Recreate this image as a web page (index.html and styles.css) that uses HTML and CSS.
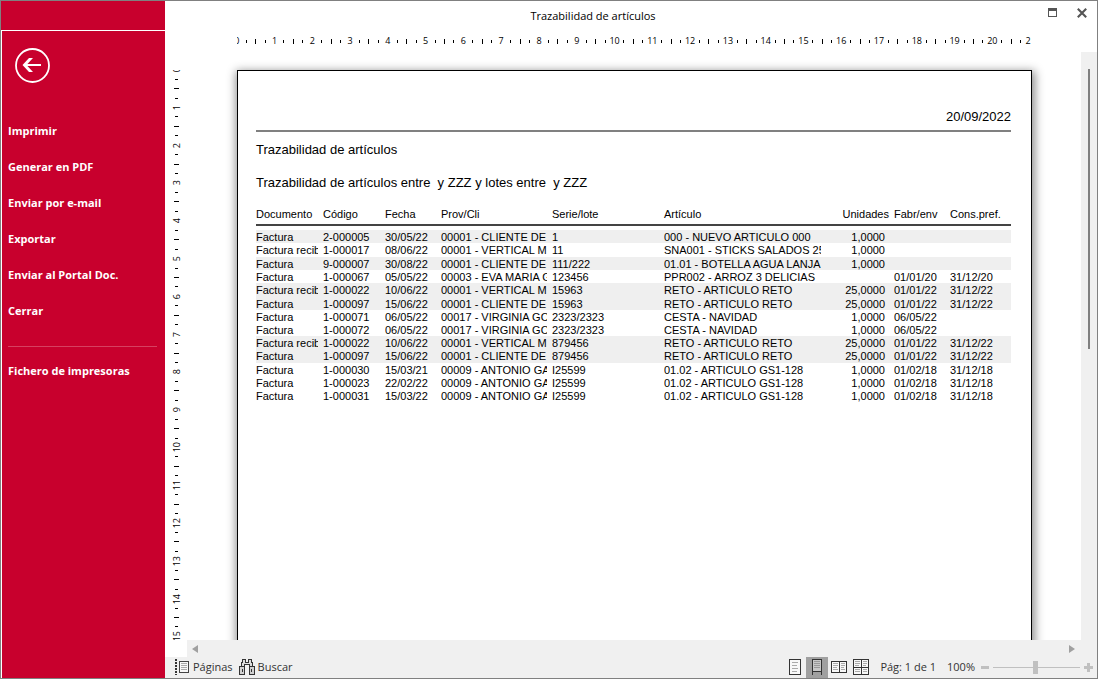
FILE: index.html
```html
<!DOCTYPE html>
<html lang="es">
<head>
<meta charset="utf-8">
<title>Trazabilidad de artículos</title>
<link rel="stylesheet" href="styles.css">
</head>
<body>
<div class="window">
  <aside class="sidebar">
    <div class="sidebar-top"></div>
    <nav class="menu">
      <button class="back" type="button" aria-label="Volver">
        <svg width="36" height="36" viewBox="0 0 36 36" fill="none" stroke="#fff"><circle cx="18.500" cy="18.500" r="16.5" stroke-width="1.8"/><path d="M11 18h16" stroke-width="2"/><path d="M15 11h4l-6.500 7 6.500 7h-4l-6.500-7z" fill="#fff" stroke="none"/></svg>
      </button>
      <button class="item" type="button">Imprimir</button>
      <button class="item" type="button">Generar en PDF</button>
      <button class="item" type="button">Enviar por e-mail</button>
      <button class="item" type="button">Exportar</button>
      <button class="item" type="button">Enviar al Portal Doc.</button>
      <button class="item" type="button">Cerrar</button>
      <hr class="separator">
      <button class="item" type="button">Fichero de impresoras</button>
    </nav>
  </aside>
  <main class="preview">
    <header class="titlebar">
      <h1 class="title">Trazabilidad de artículos</h1>
      <div class="window-buttons">
        <button type="button" aria-label="Maximizar"><svg width="10" height="10" viewBox="0 0 10 10" shape-rendering="crispEdges"><path d="M1 0h9v9H1zM2 3v5h7V3z" fill="#555" fill-rule="evenodd"/></svg></button>
        <button type="button" aria-label="Cerrar ventana"><svg width="10" height="10" viewBox="0 0 10 10"><path d="M.8.8l8.4 8.4M9.200.8L.8 9.200" stroke="#555" stroke-width="2.1"/></svg></button>
      </div>
    </header>
    <div class="ruler-row">
      <div class="ruler">
        <div class="scale">
          <div class="cm"><span>0</span><i></i><b></b><i></i></div>
          <div class="cm"><span>1</span><i></i><b></b><i></i></div>
          <div class="cm"><span>2</span><i></i><b></b><i></i></div>
          <div class="cm"><span>3</span><i></i><b></b><i></i></div>
          <div class="cm"><span>4</span><i></i><b></b><i></i></div>
          <div class="cm"><span>5</span><i></i><b></b><i></i></div>
          <div class="cm"><span>6</span><i></i><b></b><i></i></div>
          <div class="cm"><span>7</span><i></i><b></b><i></i></div>
          <div class="cm"><span>8</span><i></i><b></b><i></i></div>
          <div class="cm"><span>9</span><i></i><b></b><i></i></div>
          <div class="cm"><span>10</span><i></i><b></b><i></i></div>
          <div class="cm"><span>11</span><i></i><b></b><i></i></div>
          <div class="cm"><span>12</span><i></i><b></b><i></i></div>
          <div class="cm"><span>13</span><i></i><b></b><i></i></div>
          <div class="cm"><span>14</span><i></i><b></b><i></i></div>
          <div class="cm"><span>15</span><i></i><b></b><i></i></div>
          <div class="cm"><span>16</span><i></i><b></b><i></i></div>
          <div class="cm"><span>17</span><i></i><b></b><i></i></div>
          <div class="cm"><span>18</span><i></i><b></b><i></i></div>
          <div class="cm"><span>19</span><i></i><b></b><i></i></div>
          <div class="cm"><span>20</span><i></i><b></b><i></i></div>
          <div class="cm last"><span>2</span></div>
        </div>
      </div>
    </div>
    <div class="workspace">
      <div class="ruler-column">
        <div class="scale">
          <div class="cm"><span>0</span><i></i><b></b><i></i></div>
          <div class="cm"><span>1</span><i></i><b></b><i></i></div>
          <div class="cm"><span>2</span><i></i><b></b><i></i></div>
          <div class="cm"><span>3</span><i></i><b></b><i></i></div>
          <div class="cm"><span>4</span><i></i><b></b><i></i></div>
          <div class="cm"><span>5</span><i></i><b></b><i></i></div>
          <div class="cm"><span>6</span><i></i><b></b><i></i></div>
          <div class="cm"><span>7</span><i></i><b></b><i></i></div>
          <div class="cm"><span>8</span><i></i><b></b><i></i></div>
          <div class="cm"><span>9</span><i></i><b></b><i></i></div>
          <div class="cm"><span>10</span><i></i><b></b><i></i></div>
          <div class="cm"><span>11</span><i></i><b></b><i></i></div>
          <div class="cm"><span>12</span><i></i><b></b><i></i></div>
          <div class="cm"><span>13</span><i></i><b></b><i></i></div>
          <div class="cm"><span>14</span><i></i><b></b><i></i></div>
          <div class="cm"><span>15</span><i></i><b></b><i></i></div>
        </div>
      </div>
      <div class="canvas">
        <article class="paper">
          <p class="date">20/09/2022</p>
          <h2 class="heading">Trazabilidad de artículos</h2>
          <p class="filter">Trazabilidad de artículos entre&nbsp; y ZZZ y lotes entre&nbsp; y ZZZ</p>
          <table class="report">
            <colgroup><col class="c-doc"><col class="c-code"><col class="c-date"><col class="c-client"><col class="c-lot"><col class="c-article"><col class="c-units"><col class="c-date"><col class="c-pref"></colgroup>
            <thead>
              <tr><th>Documento</th><th>Código</th><th>Fecha</th><th>Prov/Cli</th><th>Serie/lote</th><th>Artículo</th><th class="num">Unidades</th><th>Fabr/env</th><th>Cons.pref.</th></tr>
            </thead>
            <tbody>
              <tr class="shade"><td>Factura</td><td>2-000005</td><td>30/05/22</td><td>00001 - CLIENTE DE</td><td>1</td><td>000 - NUEVO ARTICULO 000</td><td class="num">1,0000</td><td></td><td></td></tr>
              <tr><td>Factura recib</td><td>1-000017</td><td>08/06/22</td><td>00001 - VERTICAL M</td><td>11</td><td>SNA001 - STICKS SALADOS 25</td><td class="num">1,0000</td><td></td><td></td></tr>
              <tr class="shade"><td>Factura</td><td>9-000007</td><td>30/08/22</td><td>00001 - CLIENTE DE</td><td>111/222</td><td>01.01 - BOTELLA AGUA LANJA</td><td class="num">1,0000</td><td></td><td></td></tr>
              <tr><td>Factura</td><td>1-000067</td><td>05/05/22</td><td>00003 - EVA MARIA G</td><td>123456</td><td>PPR002 - ARROZ 3 DELICIAS</td><td></td><td>01/01/20</td><td>31/12/20</td></tr>
              <tr class="shade"><td>Factura recib</td><td>1-000022</td><td>10/06/22</td><td>00001 - VERTICAL M</td><td>15963</td><td>RETO - ARTICULO RETO</td><td class="num">25,0000</td><td>01/01/22</td><td>31/12/22</td></tr>
              <tr class="shade"><td>Factura</td><td>1-000097</td><td>15/06/22</td><td>00001 - CLIENTE DE</td><td>15963</td><td>RETO - ARTICULO RETO</td><td class="num">25,0000</td><td>01/01/22</td><td>31/12/22</td></tr>
              <tr><td>Factura</td><td>1-000071</td><td>06/05/22</td><td>00017 - VIRGINIA GO</td><td>2323/2323</td><td>CESTA - NAVIDAD</td><td class="num">1,0000</td><td>06/05/22</td><td></td></tr>
              <tr><td>Factura</td><td>1-000072</td><td>06/05/22</td><td>00017 - VIRGINIA GO</td><td>2323/2323</td><td>CESTA - NAVIDAD</td><td class="num">1,0000</td><td>06/05/22</td><td></td></tr>
              <tr class="shade"><td>Factura recib</td><td>1-000022</td><td>10/06/22</td><td>00001 - VERTICAL M</td><td>879456</td><td>RETO - ARTICULO RETO</td><td class="num">25,0000</td><td>01/01/22</td><td>31/12/22</td></tr>
              <tr class="shade"><td>Factura</td><td>1-000097</td><td>15/06/22</td><td>00001 - CLIENTE DE</td><td>879456</td><td>RETO - ARTICULO RETO</td><td class="num">25,0000</td><td>01/01/22</td><td>31/12/22</td></tr>
              <tr><td>Factura</td><td>1-000030</td><td>15/03/21</td><td>00009 - ANTONIO GA</td><td>I25599</td><td>01.02 - ARTICULO GS1-128</td><td class="num">1,0000</td><td>01/02/18</td><td>31/12/18</td></tr>
              <tr><td>Factura</td><td>1-000023</td><td>22/02/22</td><td>00009 - ANTONIO GA</td><td>I25599</td><td>01.02 - ARTICULO GS1-128</td><td class="num">1,0000</td><td>01/02/18</td><td>31/12/18</td></tr>
              <tr><td>Factura</td><td>1-000031</td><td>15/03/22</td><td>00009 - ANTONIO GA</td><td>I25599</td><td>01.02 - ARTICULO GS1-128</td><td class="num">1,0000</td><td>01/02/18</td><td>31/12/18</td></tr>
            </tbody>
          </table>
        </article>
      </div>
      <div class="vscroll"><div class="thumb"></div></div>
    </div>
    <div class="hscroll">
      <button type="button" aria-label="Desplazar a la izquierda"><svg width="6" height="8" viewBox="0 0 6 8"><path d="M6 0v8L0 4z" fill="#a0a0a0"/></svg></button>
      <button type="button" aria-label="Desplazar a la derecha"><svg width="6" height="8" viewBox="0 0 6 8"><path d="M0 0v8l6-4z" fill="#a0a0a0"/></svg></button>
    </div>
    <footer class="statusbar">
      <button class="tool" type="button">
        <svg width="16" height="16" viewBox="0 0 16 16" shape-rendering="crispEdges"><path d="M2 0v16" stroke="#333" stroke-width="2" stroke-dasharray="2 1"/><path d="M5.500 2.500h9v11h-9z" fill="#f8f8f8" stroke="#444"/><path d="M7 4.500h6M7 6.500h6M7 8.500h6M7 10.500h6" stroke="#aaa"/></svg>
        Páginas
      </button>
      <button class="tool" type="button">
        <svg width="16" height="16" viewBox="0 0 16 16" shape-rendering="crispEdges" stroke="#333"><path d="M3.500.5h3v3h3v-3h3v3h1v4h-3v-2h-5v2h-3v-4h1z" fill="#ddd"/><path d="M.5 7.500h5v8h-5zM10.500 7.500h5v8h-5z" fill="#d0d0d0"/><path d="M3.500 10v3M12.500 10v3" fill="none"/></svg>
        Buscar
      </button>
      <div class="views">
        <button type="button" aria-label="Una página"><svg width="16" height="16" viewBox="0 0 16 16" shape-rendering="crispEdges"><path d="M2.500.5h11v15h-11z" fill="#f8f8f8" stroke="#333"/><path d="M5 3.500h6M5 6.500h5M5 9.500h6M5 12.500h5" stroke="#aaa"/></svg></button>
        <button class="selected" type="button" aria-label="Continuo"><svg width="16" height="16" viewBox="0 0 16 16" shape-rendering="crispEdges"><path d="M3.500.5h9v12h-9z" fill="#c8c8c8" stroke="#333"/><path d="M5 2.500h6M5 4.500h6M5 6.500h6M5 8.500h6" stroke="#999"/><path d="M3.500 12v4M12.500 12v4" stroke="#333" fill="none"/></svg></button>
        <button type="button" aria-label="Dos páginas"><svg width="16" height="16" viewBox="0 0 16 16" shape-rendering="crispEdges"><path d="M.5 2.500h15v11H.5zM8.500 2v12" fill="#f8f8f8" stroke="#333"/><path d="M2 4.500h5M2 6.500h5M2 8.500h4M2 10.500h5M10 4.500h4M10 6.500h4M10 8.500h3M10 10.500h4" stroke="#aaa"/></svg></button>
        <button type="button" aria-label="Varias páginas"><svg width="16" height="16" viewBox="0 0 16 16" shape-rendering="crispEdges"><path d="M.5.5h15v15H.5z" fill="#f8f8f8"/><path d="M2 2.500h5M2 4.500h5M2 6.500h4M10 2.500h4M10 4.500h4M10 6.500h3M2 10.500h5M2 12.500h5M10 10.500h4M10 12.500h4" stroke="#aaa"/><path d="M.5.5h15v15H.5zM8.500 0v16M0 8.500h16" fill="none" stroke="#333"/></svg></button>
      </div>
      <span class="page-count">Pág: 1 de 1</span>
      <span class="percent">100%</span>
      <div class="zoom">
        <button type="button" aria-label="Alejar"><svg width="9" height="9" viewBox="0 0 9 9"><path d="M1 3h8v3H1z" fill="#c0c0c0"/></svg></button>
        <input type="range" aria-label="Zoom" min="0" max="100" value="49">
        <button type="button" aria-label="Acercar"><svg width="9" height="9" viewBox="0 0 9 9"><path d="M3 0h3v3h3v3H6v3H3V6H0V3h3z" fill="#c0c0c0"/></svg></button>
      </div>
    </footer>
  </main>
</div>
</body>
</html>
```
FILE: styles.css
```css
* { box-sizing: border-box; }

body {
  margin: 0;
  color: #000;
  font-family: "Open Sans", "Noto Sans", sans-serif;
  font-size: 11px;
  background: #fff;
}

button {
  display: flex;
  align-items: center;
  justify-content: center;
  padding: 0;
  border: 0;
  background: none;
  color: inherit;
  font: inherit;
}

svg { display: block; flex: none; }

.window {
  display: flex;
  height: 100vh;
  border: 1px solid #808080;
}

.sidebar {
  display: flex;
  flex: none;
  flex-direction: column;
  width: 164px;
  background: #c8002d;
  color: #fff;
}

.sidebar-top {
  height: 30px;
  border-bottom: 1px solid #fff;
}

.menu {
  flex: 1;
  border-left: 1px solid #fff;
  padding: 16px 6px 0;
}

.back { margin: 0 0 29px 6px; }

.item {
  justify-content: flex-start;
  width: 100%;
  height: 36px;
  font-size: 11px;
  font-weight: 700;
}

.separator {
  height: 1px;
  margin: 18px 2px 5px 0;
  border: 0;
  background: #d64060;
}

.preview {
  display: flex;
  flex: 1;
  flex-direction: column;
  min-width: 0;
}

.titlebar {
  display: flex;
  flex: none;
  align-items: flex-start;
  height: 30px;
}

.title {
  flex: 1;
  margin: 0;
  font-size: 11px;
  font-weight: 400;
  line-height: 30px;
  text-align: center;
}

.window-buttons {
  display: flex;
  justify-content: flex-end;
  gap: 20px;
  width: 76px;
  height: 23px;
  padding-right: 10px;
}

.ruler-row {
  display: flex;
  flex: none;
  justify-content: center;
  height: 21px;
  padding: 0 16px 0 23px;
}

.ruler {
  width: 795px;
  height: 20px;
  overflow: hidden;
}

.scale {
  display: flex;
  font-size: 9px;
  line-height: 20px;
}

.ruler .scale { margin-left: -5px; }

.cm {
  display: grid;
  flex: none;
  align-items: center;
  justify-items: center;
}

.ruler .cm {
  grid-template-columns: repeat(4, minmax(0, 1fr));
  width: 1cm;
  height: 20px;
}

.ruler .last { justify-items: start; }

.cm i, .cm b { background: #000; }
.ruler i { width: 1px; height: 3px; }
.ruler b { width: 1px; height: 5px; }

.workspace {
  display: flex;
  flex: 1;
  min-height: 0;
}

.ruler-column {
  flex: none;
  width: 23px;
  margin-top: 18px;
  overflow: hidden;
}

.ruler-column .scale {
  flex-direction: column;
  margin-top: -5px;
}

.ruler-column .cm {
  grid-template-rows: repeat(4, minmax(0, 1fr));
  width: 23px;
  height: 1cm;
}

.ruler-column span {
  line-height: 12px;
  writing-mode: vertical-rl;
  transform: rotate(180deg);
}

.ruler-column i { width: 3px; height: 1px; }
.ruler-column b { width: 5px; height: 1px; }

.canvas {
  display: flex;
  flex: 1;
  justify-content: center;
  align-items: flex-start;
  min-width: 0;
  padding-top: 18px;
  overflow: hidden;
}

.paper {
  flex: none;
  width: 795px;
  min-height: 29.7cm;
  padding: 38px 20px 40px 18px;
  border: 1px solid #000;
  background: #fff;
  box-shadow: 1px 3px 9px 2px rgba(0, 0, 0, 0.45);
  font-family: "Liberation Sans", Arial, sans-serif;
  font-size: 13px;
  line-height: 16px;
}

.date {
  margin: 0;
  padding-bottom: 5px;
  border-bottom: 2px solid #808080;
  text-align: right;
}

.heading {
  margin: 10px 0 0;
  font-size: 13px;
  font-weight: 400;
}

.filter { margin: 17px 0 0; }

.report {
  width: 100%;
  margin-top: 17px;
  border-spacing: 0;
  table-layout: fixed;
  font-size: 11px;
  line-height: 13px;
}

.c-doc { width: 67px; }
.c-code { width: 62px; }
.c-date { width: 56px; }
.c-client { width: 111px; }
.c-lot { width: 112px; }
.c-article { width: 162px; }
.c-units { width: 68px; }
.c-pref { width: 61px; }

.report th {
  height: 18px;
  padding: 0 0 3px;
  border-bottom: 2px solid #444;
  font-weight: 400;
  text-align: left;
  vertical-align: top;
  white-space: nowrap;
}

.report th.num {
  padding-right: 5px;
  text-align: right;
}

.report tbody::before {
  display: table-row;
  height: 4px;
  content: "";
}

.report td {
  height: 13px;
  padding: 2px 0 0;
  border-right: 5px solid transparent;
  overflow: hidden;
  line-height: 11px;
  vertical-align: top;
  white-space: nowrap;
}

.report tr:nth-child(2) td,
.report tr:nth-child(5n) td { height: 14px; }

.report td.num {
  padding-right: 4px;
  text-align: right;
}

.shade { background: #efefef; }

.vscroll {
  display: flex;
  flex: none;
  justify-content: center;
  width: 16px;
  padding-top: 17px;
  background: #f0f0f0;
}

.thumb {
  width: 2px;
  height: 49%;
  background: #808080;
}

.hscroll {
  display: flex;
  flex: none;
  justify-content: space-between;
  height: 17px;
  margin-left: 22px;
  padding: 0 22px 0 5px;
  background: #f0f0f0;
}

.statusbar {
  display: flex;
  flex: none;
  align-items: center;
  height: 21px;
  padding: 0 4px 0 9px;
  background: #f0f0f0;
  color: #333;
}

.tool,
.views button,
.page-count,
.percent { padding-bottom: 2px; }

.tool {
  gap: 3px;
  margin-right: 6px;
}

.views {
  display: flex;
  align-self: stretch;
  margin: 0 8px 0 auto;
}

.views button { width: 22px; }
.views .selected { background: #a0a0a0; }

.percent { margin: 0 5px 0 11px; }

.zoom {
  display: flex;
  align-items: center;
  gap: 4px;
}

.zoom input {
  width: 87px;
  height: 13px;
  margin: 0;
  appearance: none;
  background: linear-gradient(#c0c0c0, #c0c0c0) center / 100% 1px no-repeat;
}

.zoom input::-webkit-slider-thumb {
  width: 5px;
  height: 13px;
  appearance: none;
  background: #c0c0c0;
}
```
